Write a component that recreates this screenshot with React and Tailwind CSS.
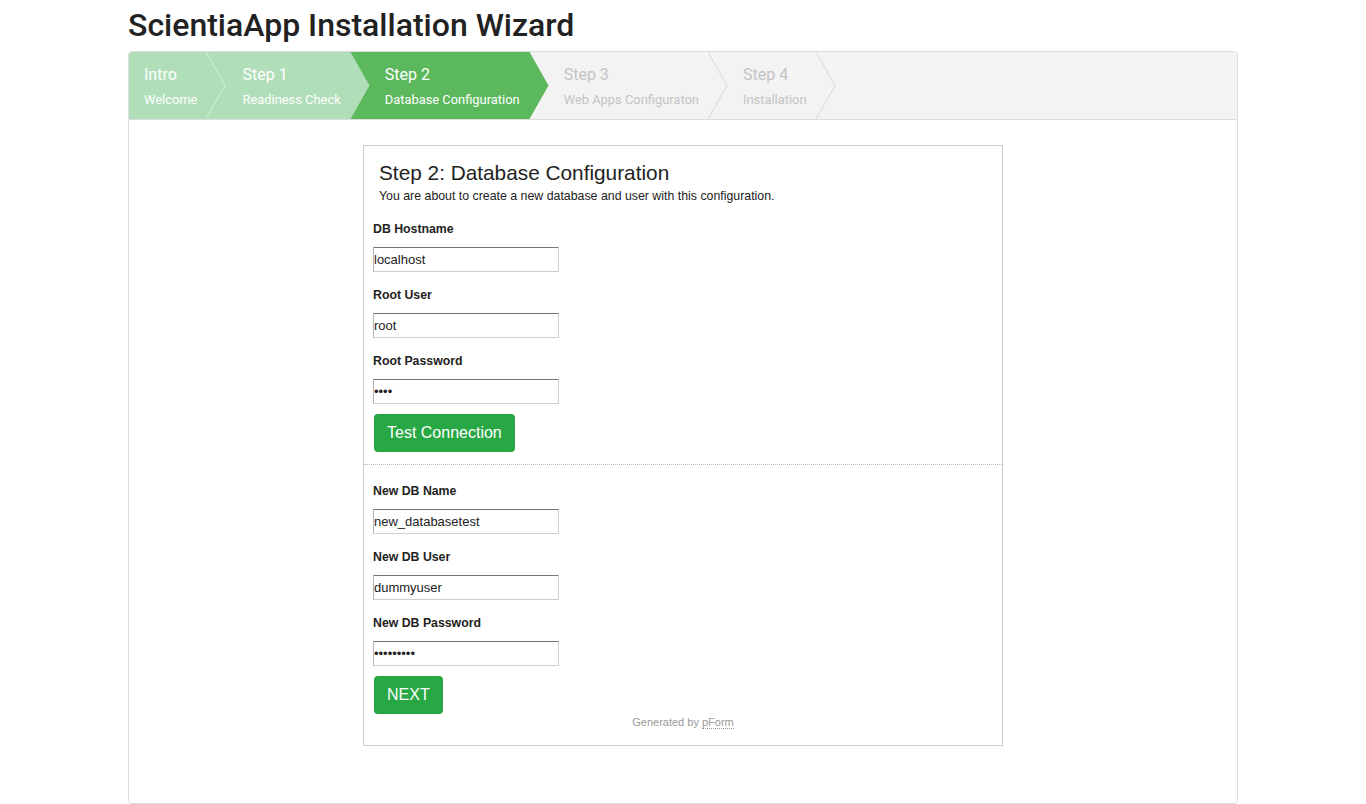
const steps = [
  { title: 'Intro', sub: 'Welcome', bg: '#b0deb9', text: 'text-white', line: '#d6eedb', pad: 'pl-[15px]' },
  { title: 'Step 1', sub: 'Readiness Check', bg: '#b0deb9', text: 'text-white', line: '#b0deb9', pad: 'pl-[36px]' },
  { title: 'Step 2', sub: 'Database Configuration', bg: '#5cb85c', text: 'text-white', line: '#5cb85c', pad: 'pl-[35px]' },
  { title: 'Step 3', sub: 'Web Apps Configuraton', bg: '#f3f3f3', text: 'text-[#c4c4c4]', line: '#d9d9d9', pad: 'pl-[35px]' },
  { title: 'Step 4', sub: 'Installation', bg: '#f3f3f3', text: 'text-[#c4c4c4]', line: '#d9d9d9', pad: 'pl-[35px]' },
]

function Arrow({ fill, line }) {
  return (
    <svg width="20" height="67" viewBox="0 0 20 67" className="absolute top-0 -right-[20px] z-10">
      <polygon points="0,0 19,33.5 0,67" fill={fill} />
      <polyline points="0,0 19,33.5 0,67" fill="none" stroke={line} strokeWidth="1" />
    </svg>
  )
}

function Steps() {
  return (
    <div className="flex h-[68px] bg-[#f3f3f3] border-b border-[#dddddd] rounded-t-[4px] overflow-hidden">
      {steps.map(s => (
        <div
          key={s.title}
          className={`relative pt-[13px] pr-[9px] ${s.pad}`}
          style={{ backgroundColor: s.bg }}
        >
          <div className={`text-[16px] leading-[20px] ${s.text}`}>{s.title}</div>
          <div className={`mt-[7px] text-[12.9px] leading-[16px] whitespace-nowrap ${s.text}`}>{s.sub}</div>
          <Arrow fill={s.bg} line={s.line} />
        </div>
      ))}
    </div>
  )
}

function Field({ label, value, type = 'text', first }) {
  return (
    <div>
      <label className={`block text-[12.3px] leading-[14px] font-bold text-[#222] ${first ? 'mt-[19px]' : 'mt-[16px]'}`}>
        {label}
      </label>
      <input
        type={type}
        defaultValue={value}
        className="block mt-[11px] w-[186px] h-[25px] px-0 text-[13px] text-[#222] bg-white border border-[#cfcfcf] border-t-[#767676] border-l-[#b5b5b5] outline-none"
      />
    </div>
  )
}

function GreenButton({ children }) {
  return (
    <button className="block mt-[10px] ml-[1px] h-[38px] px-[13px] rounded-[4px] bg-[#28a745] text-white text-[16px] leading-[38px]">
      {children}
    </button>
  )
}

export default function App() {
  return (
    <div className="min-h-[804px] bg-white font-['Roboto',sans-serif]">
      <div className="w-[1110px] mx-auto">
        <h1 className="pt-[6px] text-[32px] leading-[38px] font-medium text-[#222]">ScientiaApp Installation Wizard</h1>
        <div className="mt-[7px] h-[753px] border border-[#dddddd] rounded-[4px]">
          <Steps />
          <div className="flex justify-center pt-[25px]">
            <div className="w-[640px] border border-[#cccccc] bg-white pb-[16px] font-['Liberation_Sans',Arial,sans-serif]">
              <div className="px-[15px] pt-[15px]">
                <h2 className="text-[20.8px] leading-[24px] text-[#222]">Step 2: Database Configuration</h2>
                <p className="mt-[4px] text-[12.35px] leading-[14px] text-[#222]">
                  You are about to create a new database and user with this configuration.
                </p>
              </div>
              <div className="px-[9px]">
                <Field label="DB Hostname" value="localhost" first />
                <Field label="Root User" value="root" />
                <Field label="Root Password" value="root" type="password" />
                <GreenButton>Test Connection</GreenButton>
              </div>
              <div className="mt-[12px] border-t border-dotted border-[#bbbbbb]" />
              <div className="px-[9px]">
                <div className="pt-[3px]" />
                <Field label="New DB Name" value="new_databasetest" />
                <Field label="New DB User" value="dummyuser" />
                <Field label="New DB Password" value="dummypass" type="password" />
                <GreenButton>NEXT</GreenButton>
              </div>
              <p className="mt-[2px] text-center text-[11px] leading-[13px] text-[#999999]">
                Generated by{' '}
                <span className="border-b border-dotted border-[#999999]">pForm</span>
              </p>
            </div>
          </div>
        </div>
      </div>
    </div>
  )
}
